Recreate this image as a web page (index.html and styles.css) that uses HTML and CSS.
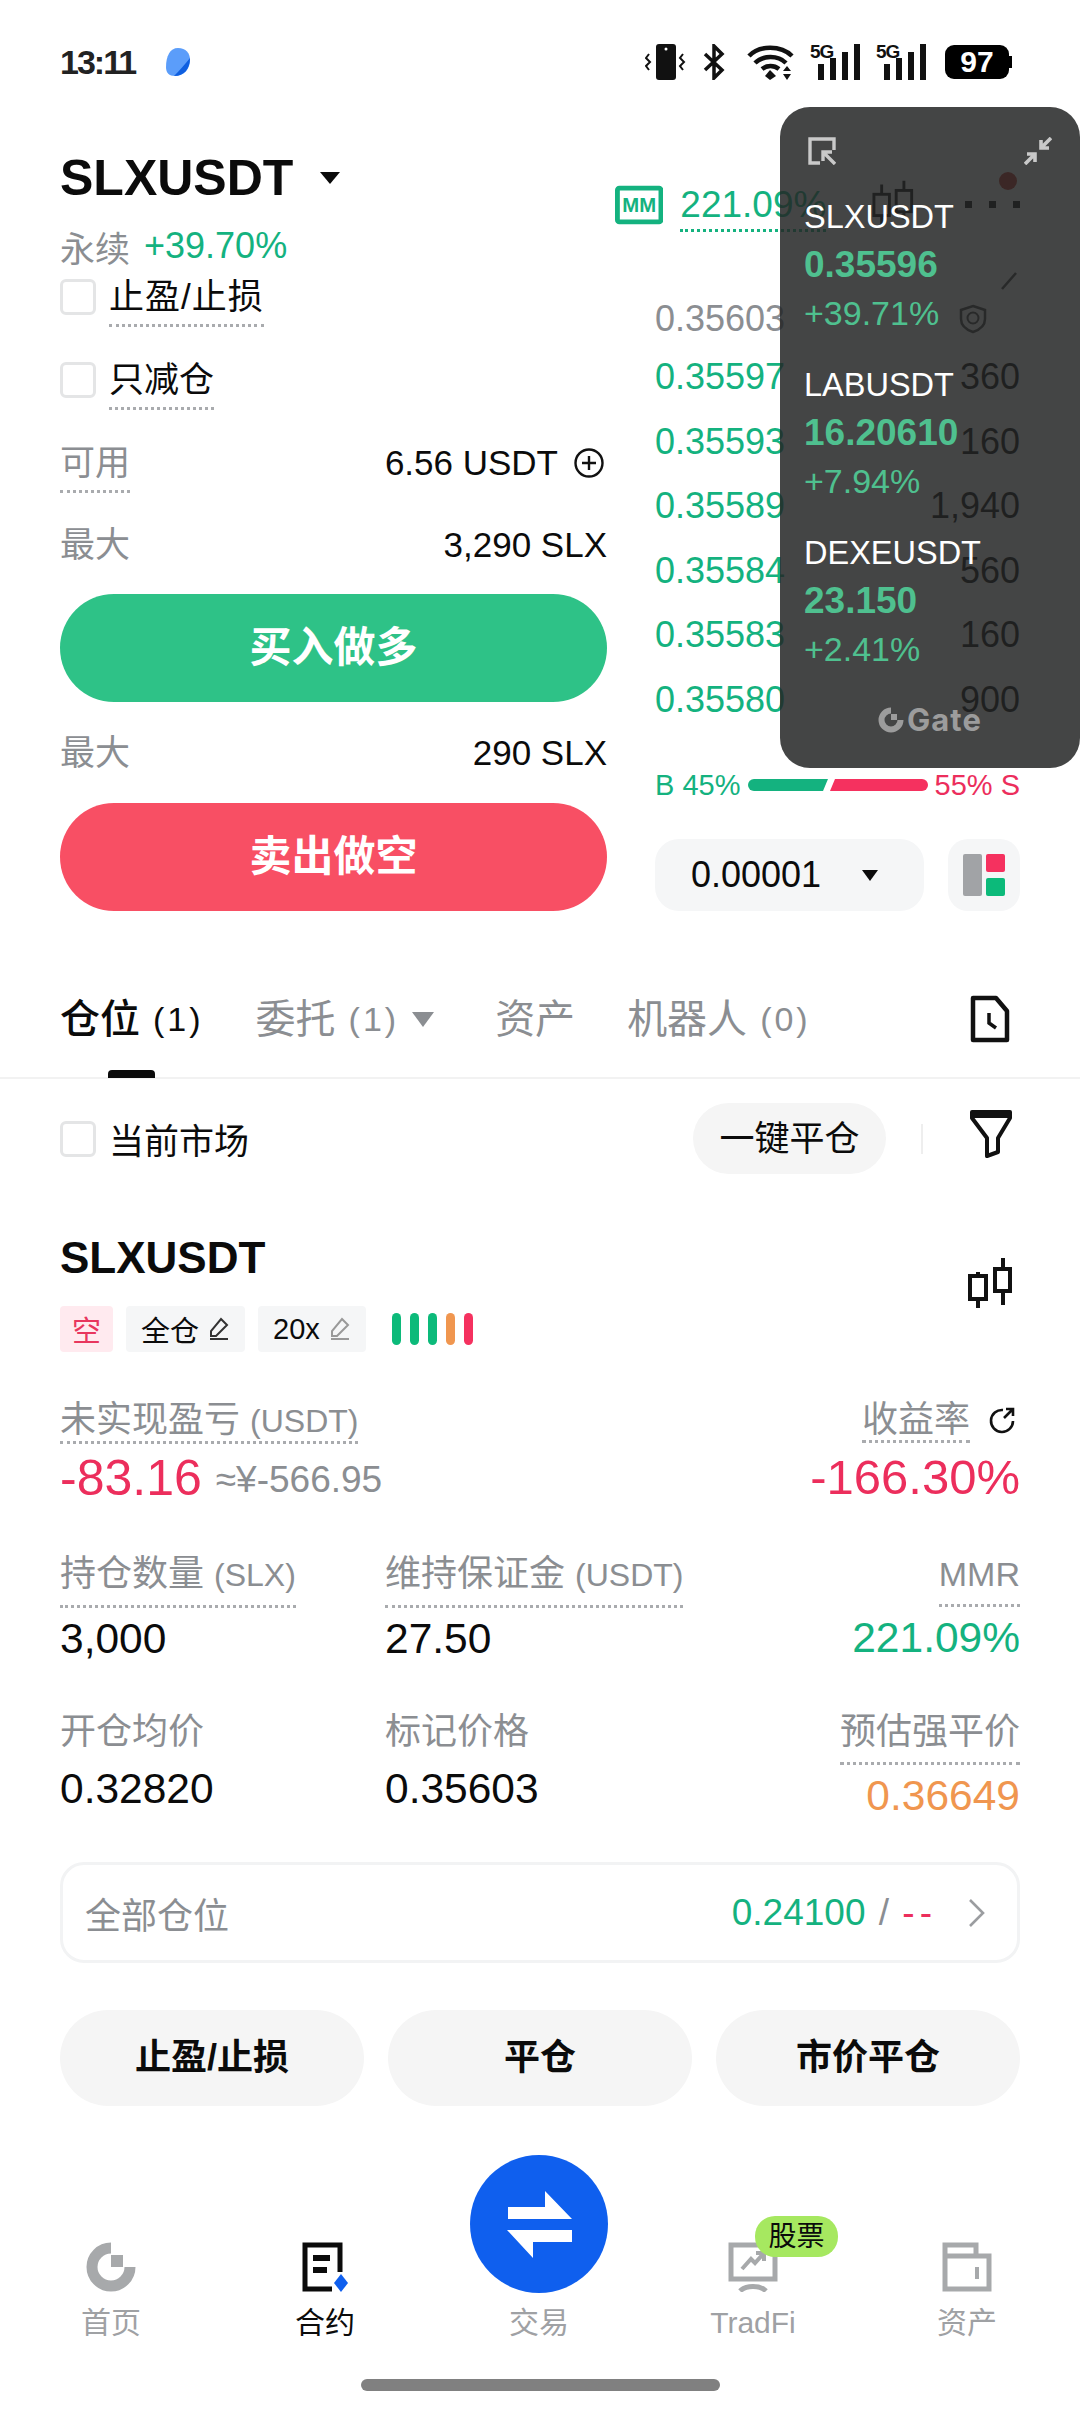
FILE: index.html
```html
<!DOCTYPE html>
<html lang="zh">
<head>
    <meta charset="UTF-8">
    <meta name="viewport" content="width=device-width, initial-scale=1.0">
    <title>SLXUSDT</title>
    <link rel="stylesheet" href="styles.css">
</head>
<body>
<div class="screen">

    <div class="status">
        <span class="time">13:11</span>
        <svg class="app-dot" width="26" height="30" viewBox="0 0 26 30"><path d="M13 1C21 1 25 6 25 13C25 22 19 29 10 29C4 29 1 26 1 20C1 9 5 1 13 1Z" fill="#5b9dfa"/><path d="M25 11C25 22 19 29 9 29C14 24 20 17 25 11Z" fill="#0f5fe0"/></svg>
        <div class="status-icons">
            <svg class="si-vibe" width="46" height="36" viewBox="0 0 46 36"><rect x="11" y="0" width="20" height="36" rx="3" fill="#111"/><circle cx="21" cy="5" r="1.5" fill="#fff"/><path d="M4 10L1 14L5 18L1 22L4 26M38 10L35 14L39 18L35 22L38 26" fill="none" stroke="#111" stroke-width="2"/></svg>
            <svg class="si-bt" width="22" height="36" viewBox="0 0 22 36"><path d="M2 10L19 26L11 34V2L19 10L2 26" fill="none" stroke="#111" stroke-width="3.5"/></svg>
            <svg class="si-wifi" width="50" height="36" viewBox="0 0 50 36"><path d="M2 12C12 1 34 1 45 12M8 19C16 11 31 11 39 19M15 25C20 21 27 21 32 25" fill="none" stroke="#111" stroke-width="4.5"/><path d="M23 26L29 32L23 36L18 32Z" fill="#111"/><path d="M40 22L44 27H36ZM40 36L36 30H44Z" fill="#111"/></svg>
            <div class="signal"><span class="five-g">5G</span><svg width="52" height="36" viewBox="0 0 52 36"><path d="M8 20h6v16H8zM20 14h6v22H20zM32 8h6v28H32zM44 0h6v36H44z" fill="#111"/></svg></div>
            <div class="signal sig-two"><span class="five-g">5G</span><svg width="52" height="36" viewBox="0 0 52 36"><path d="M8 20h6v16H8zM20 14h6v22H20zM32 8h6v28H32zM44 0h6v36H44z" fill="#111"/></svg></div>
            <div class="battery"><span>97</span></div>
        </div>
    </div>

    <div class="trade">
        <div class="order-col">
            <div class="pair-row">
                <h1 class="pair">SLXUSDT</h1>
                <span class="caret caret-big"></span>
            </div>
            <div class="sub-row"><span class="muted">永续</span><span class="up pct">+39.70%</span></div>
            <div class="check-row first"><span class="box"></span><span class="dotted">止盈/止损</span></div>
            <div class="check-row"><span class="box"></span><span class="dotted">只减仓</span></div>
            <div class="kv avail">
                <span class="muted dotted">可用</span>
                <span class="kv-val">6.56 USDT
                    <svg class="plus" width="30" height="30" viewBox="0 0 30 30"><circle cx="15" cy="15" r="13.5" fill="none" stroke="#111" stroke-width="2.4"/><path d="M8 15H22M15 8V22" stroke="#111" stroke-width="2.4"/></svg>
                </span>
            </div>
            <div class="kv max"><span class="muted">最大</span><span class="kv-val">3,290 SLX</span></div>
            <div class="big-btn buy">买入做多</div>
            <div class="kv max2"><span class="muted">最大</span><span class="kv-val">290 SLX</span></div>
            <div class="big-btn sell">卖出做空</div>
        </div>

        <div class="book-col">
            <div class="book-head">
                <svg width="50" height="40" viewBox="0 0 50 40"><rect x="2.5" y="2.5" width="45" height="35" rx="2" fill="none" stroke="#14b27f" stroke-width="5"/><text x="25" y="27" class="mm-text" text-anchor="middle">MM</text></svg>
                <span class="mmr-top">221.09%</span>
                <svg class="candle-top" width="44" height="46" viewBox="0 0 44 46"><path d="M10 4V46M33 0V40" stroke="#111" stroke-width="3"/><rect x="2" y="14" width="16" height="22" fill="#fff" stroke="#111" stroke-width="3"/><rect x="25" y="10" width="16" height="22" fill="#fff" stroke="#111" stroke-width="3"/></svg>
                <div class="dots"><i></i><i></i><i></i></div>
                <span class="red-dot"></span>
            </div>
            <div class="chev-row">
                <svg width="16" height="18" viewBox="0 0 16 18"><path d="M1 17L15 1" stroke="#444" stroke-width="2.500"/></svg>
            </div>
            <div class="book">
                <div class="book-row top-row"><span class="muted">0.35603</span>
                    <svg class="shield" width="28" height="30" viewBox="0 0 28 30"><path d="M14 2L26 6V15C26 22 20 26 14 28C8 26 2 22 2 15V6Z" fill="none" stroke="#444" stroke-width="2.500"/><circle cx="14" cy="14" r="5.500" fill="none" stroke="#444" stroke-width="2"/></svg>
                </div>
                <div class="book-row"><span class="up">0.35597</span><span>360</span></div>
                <div class="book-row"><span class="up">0.35593</span><span>160</span></div>
                <div class="book-row"><span class="up">0.35589</span><span>1,940</span></div>
                <div class="book-row"><span class="up">0.35584</span><span>560</span></div>
                <div class="book-row"><span class="up">0.35583</span><span>160</span></div>
                <div class="book-row"><span class="up">0.35580</span><span>900</span></div>
            </div>
            <div class="ratio">
                <span class="up">B 45%</span>
                <svg width="182" height="14" viewBox="0 0 182 14"><path d="M7 1H81L76 13H7A6 6 0 0 1 7 1Z" fill="#14b27f"/><path d="M88 1H175A6 6 0 0 1 175 13H83Z" fill="#f5315f"/></svg>
                <span class="down">55% S</span>
            </div>
            <div class="book-tools">
                <div class="tick">0.00001<span class="caret"></span></div>
                <div class="layout-btn">
                    <svg width="42" height="42" viewBox="0 0 42 42"><rect x="0" y="0" width="19" height="42" rx="2" fill="#a1a3a6"/><rect x="23" y="0" width="19" height="18" rx="2" fill="#f5315f"/><rect x="23" y="24" width="19" height="18" rx="2" fill="#0cba7a"/></svg>
                </div>
            </div>
        </div>
    </div>

    <div class="tabs">
        <div class="tab active">仓位<small>(1)</small></div>
        <div class="tab">委托<small>(1)</small><span class="caret caret-grey"></span></div>
        <div class="tab">资产</div>
        <div class="tab">机器人<small>(0)</small></div>
        <svg class="tab-icon" width="40" height="48" viewBox="0 0 40 48"><path d="M3 3H26L37 16V45H3Z" fill="none" stroke="#111" stroke-width="4.500" stroke-linejoin="round"/><path d="M19 18V28L26 33" fill="none" stroke="#111" stroke-width="3.500"/></svg>
    </div>

    <div class="filter-row">
        <span class="box"></span>
        <span class="filter-label">当前市场</span>
        <div class="close-all">一键平仓</div>
        <span class="vline"></span>
        <svg class="filter-icon" width="42" height="48" viewBox="0 0 42 48"><path d="M2 2H40V8L28 28V42L17 46V28L2 8Z" fill="none" stroke="#111" stroke-width="4" stroke-linejoin="round"/><path d="M2 2H40V8H2Z" fill="#111"/></svg>
    </div>

    <div class="pos-head">
        <div>
            <div class="pos-pair">SLXUSDT</div>
            <div class="tags">
                <span class="tag tag-short">空</span>
                <span class="tag">全仓
                    <svg width="22" height="24" viewBox="0 0 22 24"><path d="M13 2L19 8L8 19H3V14ZM2 22H20" fill="none" stroke="#333" stroke-width="2"/></svg>
                </span>
                <span class="tag">20x
                    <svg width="22" height="24" viewBox="0 0 22 24"><path d="M13 2L19 8L8 19H3V14ZM2 22H20" fill="none" stroke="#999" stroke-width="2"/></svg>
                </span>
                <div class="risk"><i class="g"></i><i class="g"></i><i class="g"></i><i class="o"></i><i class="r"></i></div>
            </div>
        </div>
        <svg class="pos-candle" width="44" height="50" viewBox="0 0 44 50"><path d="M10 14V50M35 0V47" stroke="#111" stroke-width="4"/><rect x="2" y="18" width="16" height="23" fill="#fff" stroke="#111" stroke-width="4"/><rect x="27" y="11" width="15" height="22" fill="#fff" stroke="#111" stroke-width="4"/></svg>
    </div>

    <div class="pnl-row">
        <div>
            <span class="label dotted tight">未实现盈亏 <small>(USDT)</small></span>
            <div class="pnl"><span class="down">-83.16</span><span class="approx">≈¥-566.95</span></div>
        </div>
        <div class="right">
            <div class="roe-label"><span class="label dotted tight">收益率</span>
                <svg width="28" height="28" viewBox="0 0 28 28"><path d="M15 4A11 11 0 1 0 25 15M18 3H25V10M25 3L16 12" fill="none" stroke="#111" stroke-width="2.600"/></svg>
            </div>
            <div class="pnl pnl-right down">-166.30%</div>
        </div>
    </div>

    <div class="stat-row">
        <div class="stat"><span class="label dotted">持仓数量 <small>(SLX)</small></span><div class="val">3,000</div></div>
        <div class="stat"><span class="label dotted">维持保证金 <small>(USDT)</small></span><div class="val">27.50</div></div>
        <div class="stat right"><span class="label dotted mmr">MMR</span><div class="val up">221.09%</div></div>
    </div>
    <div class="stat-row">
        <div class="stat"><span class="label plain">开仓均价</span><div class="val">0.32820</div></div>
        <div class="stat"><span class="label plain">标记价格</span><div class="val">0.35603</div></div>
        <div class="stat right"><span class="label dotted">预估强平价</span><div class="val warn">0.36649</div></div>
    </div>

    <div class="all-pos">
        <span class="muted all-label">全部仓位</span>
        <span class="all-val"><span class="up">0.24100</span> <span class="muted">/</span> <span class="down dash">--</span></span>
        <svg width="20" height="30" viewBox="0 0 20 30"><path d="M3 2L16 15L3 28" fill="none" stroke="#9b9da0" stroke-width="2.600"/></svg>
    </div>

    <div class="actions">
        <div class="action">止盈/止损</div>
        <div class="action">平仓</div>
        <div class="action">市价平仓</div>
    </div>

    <div class="nav">
        <div class="nav-item">
            <svg width="50" height="50" viewBox="0 0 50 50"><path d="M25 6A19 19 0 1 0 44 25" fill="none" stroke="#a7a9ab" stroke-width="11"/><rect x="25" y="13" width="12" height="12" fill="#a7a9ab"/></svg>
            <span>首页</span>
        </div>
        <div class="nav-item current">
            <svg width="50" height="50" viewBox="0 0 50 50"><path d="M40 30V3H5V47H32" fill="none" stroke="#0b0b0b" stroke-width="5"/><path d="M13 13H30V19H13ZM13 25H27V31H13Z" fill="#0b0b0b"/><path d="M41 32L48 41L41 50L34 41Z" fill="#0f5fee"/></svg>
            <span>合约</span>
        </div>
        <div class="nav-item">
            <div class="swap">
                <svg width="138" height="138" viewBox="0 0 138 138"><path d="M38 52H75V36L102 64H38ZM102 75V87H63V103L37 75Z" fill="#fff"/></svg>
            </div>
            <span>交易</span>
        </div>
        <div class="nav-item">
            <svg width="50" height="50" viewBox="0 0 50 50"><path d="M3 3H47V37H3Z" fill="none" stroke="#a7a9ab" stroke-width="5"/><path d="M14 27L23 17L27 21L35 12M28 11H36V19" fill="none" stroke="#a7a9ab" stroke-width="4"/><path d="M12 49C18 43 32 43 38 49" fill="none" stroke="#a7a9ab" stroke-width="5"/></svg>
            <span>TradFi</span>
            <span class="stock-badge">股票</span>
        </div>
        <div class="nav-item">
            <svg width="50" height="50" viewBox="0 0 50 50"><path d="M3 14V3H34V14M3 14H47V47H3Z" fill="none" stroke="#a7a9ab" stroke-width="5"/><path d="M35 25V37" stroke="#a7a9ab" stroke-width="4"/></svg>
            <span>资产</span>
        </div>
    </div>

    <div class="home-bar"></div>

    <!-- floating watch window -->
    <div class="float">
        <div class="float-top">
            <svg width="28" height="28" viewBox="0 0 28 28"><path d="M12 26H2V2H26V13" fill="none" stroke="#c9c9c9" stroke-width="3.400"/><path d="M27 27L16 16M15 24V15H24" fill="none" stroke="#c9c9c9" stroke-width="3.400"/></svg>
            <svg width="28" height="28" viewBox="0 0 28 28"><path d="M27 1L17 11M17 3V11H25M1 27L11 17M3 17H11V25" fill="none" stroke="#c9c9c9" stroke-width="3.600"/></svg>
        </div>
        <div class="quote first-quote"><div>SLXUSDT</div><div class="q-price">0.35596</div><div class="q-pct">+39.71%</div></div>
        <div class="quote"><div>LABUSDT</div><div class="q-price">16.20610</div><div class="q-pct">+7.94%</div></div>
        <div class="quote"><div>DEXEUSDT</div><div class="q-price">23.150</div><div class="q-pct">+2.41%</div></div>
        <div class="float-logo">
            <svg width="26" height="26" viewBox="0 0 26 26"><path d="M13 3.500A9.500 9.500 0 1 0 22.500 13" fill="none" stroke="#9c9c9c" stroke-width="6"/><rect x="13" y="7" width="6" height="6" fill="#9c9c9c"/></svg>
            <span>Gate</span>
        </div>
    </div>

</div>
</body>
</html>
```

FILE: styles.css
```css
body {
    margin: 0;
    background: #fff;
    font-family: "Liberation Sans", "Noto Sans CJK SC", sans-serif;
    color: #0b0b0b;
}

.screen {
    position: relative;
    width: 1080px;
    height: 2412px;
    overflow: hidden;
    background: #fff;
}

.up { color: #14b27f; }
.down { color: #ec2e5c; }
.warn { color: #f0964f; }
.muted { color: #8b8e92; }
.right { text-align: right; }

.dotted {
    display: inline-block;
    line-height: 40px;
    padding-bottom: 7px;
    border-bottom: 3px dotted #a9abae;
}

.caret {
    display: inline-block;
    width: 0;
    height: 0;
    border-left: 8px solid transparent;
    border-right: 8px solid transparent;
    border-top: 11px solid #0b0b0b;
}

/* status bar */
.status {
    display: flex;
    align-items: center;
    height: 124px;
    padding: 0 68px 0 60px;
    box-sizing: border-box;
}

.time {
    font-size: 34px;
    font-weight: 700;
    letter-spacing: -2px;
    color: #222;
}

.app-dot {
    margin-left: 30px;
}

.status-icons {
    display: flex;
    align-items: center;
    margin-left: auto;
}

.si-bt { margin-left: 12px; }
.si-wifi { margin-left: 22px; }

.signal {
    position: relative;
    margin-left: 13px;
}

.signal svg {
    display: block;
}

.sig-two {
    margin-left: 14px;
}

.five-g {
    position: absolute;
    left: 0;
    top: -3px;
    font-size: 19px;
    font-weight: 700;
    letter-spacing: -1px;
    color: #111;
}

.battery {
    position: relative;
    width: 64px;
    height: 34px;
    margin-left: 17px;
    margin-right: 3px;
    background: #000;
    border-radius: 9px;
    color: #fff;
    font-size: 30px;
    font-weight: 700;
    line-height: 34px;
    text-align: center;
}

.battery::after {
    content: "";
    position: absolute;
    right: -3px;
    top: 11px;
    width: 3px;
    height: 12px;
    background: #000;
}

/* order form + book */
.trade {
    display: flex;
    justify-content: space-between;
    padding: 0 60px;
}

.order-col {
    width: 547px;
    margin-right: 8px;
    flex-shrink: 0;
}

.pair-row {
    display: flex;
    align-items: center;
    height: 60px;
    margin-top: 24px;
}

.pair {
    margin: 0;
    font-size: 50px;
    font-weight: 700;
    line-height: 60px;
}

.caret-big {
    margin-left: 27px;
    border-left-width: 10px;
    border-right-width: 10px;
    border-top-width: 12px;
}

.sub-row {
    display: flex;
    gap: 14px;
    align-items: center;
    height: 44px;
    margin-top: 16px;
    font-size: 35px;
}

.pct {
    font-size: 36px;
}

.check-row {
    display: flex;
    align-items: flex-start;
    gap: 13px;
    height: 50px;
    margin-top: 33px;
    font-size: 35px;
}

.check-row.first {
    margin-top: 9px;
    letter-spacing: 1px;
}

.box {
    display: block;
    flex-shrink: 0;
    width: 30px;
    height: 30px;
    margin-top: 2px;
    border: 3px solid #e4e5e6;
    border-radius: 6px;
}

.kv {
    display: flex;
    justify-content: space-between;
    align-items: flex-start;
    font-size: 35px;
    line-height: 40px;
}

.avail { margin-top: 33px; }
.max { margin-top: 32px; }
.max2 { margin-top: 31px; }

.kv-val {
    display: flex;
    align-items: center;
    gap: 16px;
    font-size: 35px;
    white-space: nowrap;
}

.plus {
    margin-right: 3px;
}

.big-btn {
    height: 108px;
    border-radius: 54px;
    color: #fff;
    font-size: 42px;
    font-weight: 700;
    line-height: 108px;
    text-align: center;
}

.buy {
    margin-top: 29px;
    background: #2ec287;
}

.sell {
    margin-top: 30px;
    background: #f84f64;
}

.book-col {
    position: relative;
    width: 405px;
    flex-shrink: 0;
}

.book-head {
    display: flex;
    align-items: flex-start;
    height: 50px;
    margin-top: 61px;
}

.mm-text {
    font-size: 21px;
    font-weight: 700;
    fill: #14b27f;
}

.mmr-top {
    margin-left: 17px;
    color: #14b27f;
    font-size: 37px;
    line-height: 40px;
    padding-bottom: 4px;
    border-bottom: 3px dotted #14b27f;
}

.candle-top {
    margin-left: 46px;
    margin-top: -5px;
}

.dots {
    display: flex;
    gap: 17px;
    margin-left: 50px;
    margin-top: 16px;
}

.dots i {
    width: 7px;
    height: 7px;
    background: #111;
}

.red-dot {
    position: absolute;
    right: 3px;
    top: 48px;
    width: 18px;
    height: 18px;
    border-radius: 50%;
    background: #c0392f;
}

.chev-row {
    display: flex;
    justify-content: flex-end;
    height: 58px;
    padding: 37px 3px 0 0;
    box-sizing: border-box;
}

.book {
    padding-left: 40px;
    font-size: 36px;
}

.book-row {
    display: flex;
    justify-content: space-between;
    align-items: center;
    height: 64.500px;
}

.top-row {
    height: 52px;
}

.shield {
    margin-right: 33px;
}

.ratio {
    display: flex;
    justify-content: space-between;
    align-items: center;
    height: 32px;
    margin-top: 37px;
    padding-left: 40px;
    font-size: 29px;
}

.book-tools {
    display: flex;
    justify-content: space-between;
    margin-top: 38px;
    padding-left: 40px;
}

.tick {
    display: flex;
    align-items: center;
    justify-content: space-between;
    width: 269px;
    height: 72px;
    padding: 0 46px 0 36px;
    box-sizing: border-box;
    background: #f5f6f7;
    border-radius: 24px;
    font-size: 36px;
}

.layout-btn {
    display: flex;
    align-items: center;
    justify-content: center;
    width: 72px;
    height: 72px;
    background: #f5f6f7;
    border-radius: 20px;
}

/* tabs */
.tabs {
    display: flex;
    align-items: center;
    gap: 52px;
    height: 168px;
    padding: 84px 70px 34px 60px;
    box-sizing: border-box;
    border-bottom: 2px solid #f2f2f2;
    color: #8b8e92;
    font-size: 40px;
}

.tab {
    position: relative;
    display: flex;
    align-items: center;
    line-height: 50px;
    white-space: nowrap;
}

.tab small {
    margin-left: 13px;
    font-size: 34px;
    letter-spacing: 3px;
}

.tab.active {
    color: #0b0b0b;
    font-weight: 500;
}

.tab.active::after {
    content: "";
    position: absolute;
    left: 48px;
    bottom: -34px;
    width: 47px;
    height: 8px;
    background: #0b0b0b;
    border-radius: 4px 4px 0 0;
}

.caret-grey {
    margin-left: 13px;
    margin-right: 9px;
    border-left-width: 11px;
    border-right-width: 11px;
    border-top-width: 15px;
    border-top-color: #8b8e92;
}

.tab-icon {
    margin-left: auto;
}

.filter-row {
    display: flex;
    align-items: center;
    height: 71px;
    margin-top: 24px;
    padding: 0 68px 0 60px;
}

.filter-label {
    margin-left: 13px;
    font-size: 35px;
}

.filter-row .box {
    margin-top: 0;
}

.filter-icon {
    margin-top: -10px;
}

.close-all {
    width: 193px;
    height: 71px;
    margin-left: auto;
    background: #f5f5f5;
    border-radius: 36px;
    font-size: 35px;
    line-height: 71px;
    text-align: center;
}

.vline {
    width: 2px;
    height: 30px;
    margin: 0 47px 0 35px;
    background: #eeeeee;
}

/* position card */
.pos-head {
    display: flex;
    justify-content: space-between;
    align-items: flex-start;
    margin-top: 59px;
    padding: 0 68px 0 60px;
}

.pos-pair {
    font-size: 44px;
    font-weight: 700;
    line-height: 50px;
}

.pos-candle {
    margin-top: 25px;
}

.tags {
    display: flex;
    align-items: center;
    gap: 13px;
    height: 46px;
    margin-top: 23px;
}

.tag {
    display: flex;
    align-items: center;
    gap: 9px;
    height: 46px;
    padding: 0 15px;
    background: #f5f6f7;
    border-radius: 4px;
    font-size: 29px;
}

.tag-short {
    padding: 0 12px;
    background: #ffeaef;
    color: #e8365e;
}

.risk {
    display: flex;
    gap: 9px;
    margin-left: 13px;
}

.risk i {
    width: 9px;
    height: 32px;
    border-radius: 5px;
}

.risk .g { background: #0cba7a; }
.risk .o { background: #f0964f; }
.risk .r { background: #f5315f; }

.label {
    color: #8b8e92;
    font-size: 36px;
    line-height: 40px;
    white-space: nowrap;
}

.label small {
    font-size: 32px;
}

.label.dotted {
    padding-bottom: 10px;
}

.label.dotted.tight {
    padding-bottom: 0;
}

.label.mmr {
    font-size: 34px;
}

.label.plain {
    display: block;
    margin-bottom: 12px;
}

.pnl-row {
    display: flex;
    justify-content: space-between;
    margin-top: 48px;
    padding: 0 60px;
}

.pnl {
    display: flex;
    align-items: center;
    gap: 14px;
    height: 56px;
    margin-top: 6px;
    font-size: 50px;
}

.pnl-right {
    justify-content: flex-end;
    font-size: 49px;
}

.approx {
    margin-top: 4px;
    color: #8b8e92;
    font-size: 37px;
}

.roe-label {
    display: flex;
    justify-content: flex-end;
    align-items: flex-start;
    gap: 18px;
    margin-right: 4px;
}

.roe-label svg {
    margin-top: 6px;
}

.stat-row {
    display: flex;
    margin-top: 48px;
    padding: 0 60px;
}

.stat {
    width: 325px;
}

.stat.right {
    width: auto;
    margin-left: auto;
}

.val {
    height: 50px;
    margin-top: 6px;
    font-size: 42.500px;
    line-height: 50px;
}

.label.plain + .val {
    margin-top: 0;
}

.all-pos {
    display: flex;
    align-items: center;
    height: 101px;
    margin: 41px 60px 0;
    padding: 0 30px 0 22px;
    box-sizing: border-box;
    border: 3px solid #f2f3f4;
    border-radius: 24px;
    font-size: 37px;
}

.all-label {
    font-size: 36px;
}

.all-val {
    margin-left: auto;
    margin-right: 30px;
    word-spacing: 3px;
}

.dash {
    letter-spacing: 5px;
}

.actions {
    display: flex;
    justify-content: space-between;
    margin-top: 47px;
    padding: 0 60px;
}

.action {
    width: 304px;
    height: 96px;
    background: #f5f5f5;
    border-radius: 48px;
    font-size: 36px;
    font-weight: 700;
    line-height: 96px;
    text-align: center;
}

/* bottom nav */
.nav {
    display: grid;
    grid-template-columns: repeat(5, 214px);
    align-items: end;
    height: 188px;
    margin-top: 49px;
    padding: 0 4px;
}

.nav-item {
    position: relative;
    display: flex;
    flex-direction: column;
    align-items: center;
    color: #9fa1a4;
    font-size: 30px;
    line-height: 40px;
}

.nav-item svg {
    margin-bottom: 11px;
}

.nav-item.current {
    color: #0b0b0b;
}

.swap {
    width: 138px;
    height: 138px;
    margin-bottom: 10px;
    background: #0f5fee;
    border-radius: 50%;
}

.swap svg {
    display: block;
}

.stock-badge {
    position: absolute;
    left: 109px;
    top: -26px;
    width: 83px;
    height: 41px;
    background: #a6e860;
    border-radius: 20px;
    color: #0b0b0b;
    font-size: 28px;
    line-height: 41px;
    text-align: center;
}

.home-bar {
    width: 359px;
    height: 12px;
    margin: 36px auto 0;
    background: #808080;
    border-radius: 6px;
}

/* floating watch window */
.float {
    position: absolute;
    left: 780px;
    top: 107px;
    width: 300px;
    height: 661px;
    padding: 30px 28px 0 24px;
    box-sizing: border-box;
    background: rgba(35, 36, 37, 0.85);
    border-radius: 30px;
    color: #fff;
    font-size: 32.500px;
    line-height: 48px;
}

.float-top {
    display: flex;
    justify-content: space-between;
    height: 28px;
    padding-left: 4px;
}

.quote {
    margin-top: 24px;
    white-space: nowrap;
}

.first-quote {
    margin-top: 28px;
}

.q-price {
    color: #4fc08f;
    font-size: 37px;
    font-weight: 700;
}

.q-pct {
    color: #4fc08f;
    font-size: 34px;
}

.float-logo {
    display: flex;
    justify-content: center;
    align-items: center;
    gap: 3px;
    margin-top: 34px;
    padding-left: 4px;
    color: #9c9c9c;
    font-family: Inter, sans-serif;
    font-size: 31px;
    font-weight: 700;
    letter-spacing: 1px;
    line-height: 26px;
}
```
